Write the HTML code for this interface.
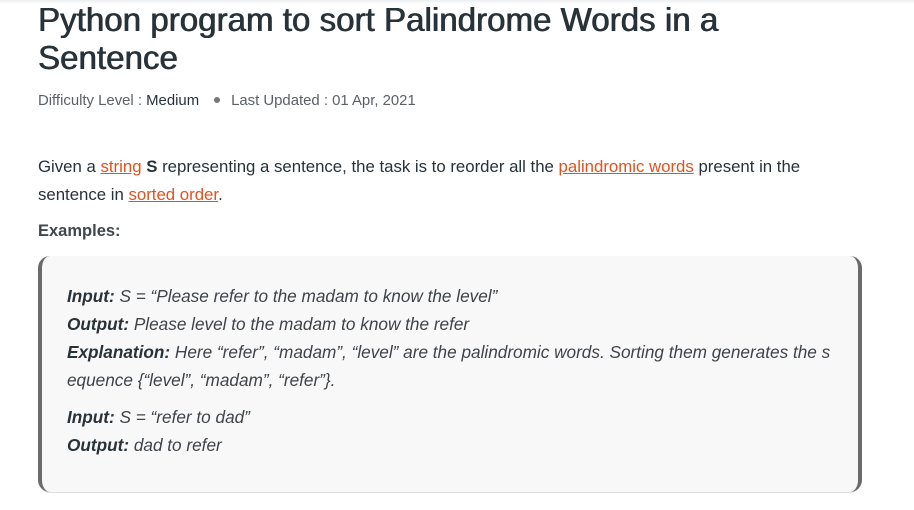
<!DOCTYPE html>
<html><head><meta charset="utf-8"><style>
html,body{margin:0;padding:0;background:#fff;width:914px;height:510px;overflow:hidden}
body{font-family:"Liberation Sans",sans-serif;color:#273239;position:relative}
.top{position:absolute;left:0;top:0;width:914px;height:4px;background:linear-gradient(#eceef0,#fff)}
h1{position:absolute;left:38px;top:1px;margin:0;font-size:33px;line-height:38px;font-weight:normal;text-shadow:0.5px 0 0 #273239,-0.3px 0 0 #273239;color:#273239;width:800px;letter-spacing:0.05px}
.meta{position:absolute;left:38px;top:93px;font-size:14.9px;color:#5b6167}
.meta b{font-weight:normal;color:#273239}
.dot{display:inline-block;width:6px;height:6px;border-radius:50%;background:#777;margin:0 11px 2px 15px;vertical-align:middle}
p.d{position:absolute;left:38px;top:153px;margin:0;font-size:16.8px;line-height:28px;width:800px;color:#273239}
a{color:#e0531f;text-decoration:underline}
.ex{position:absolute;left:38px;top:222px;font-size:16.5px;font-weight:bold;color:#40464c}
.box{position:absolute;left:38px;top:256px;width:824px;height:236px;background:#f8f8f8;border-left:4px solid #6b6b6b;border-right:4px solid #6b6b6b;border-radius:12px;box-sizing:border-box;box-shadow:0 2px 0 -1px #ddd}
.box div{position:absolute;left:25px;font-style:italic;font-size:17.2px;color:#3e444a;line-height:28px;width:790px;white-space:nowrap}
.box b{color:#273239}
</style></head><body>
<div class="top"></div>
<h1>Python program to sort Palindrome Words in a Sentence</h1>
<div class="meta">Difficulty Level : <b>Medium</b><span class="dot"></span>Last Updated : 01 Apr, 2021</div>
<p class="d">Given a <a>string</a> <b>S</b> representing a sentence, the task is to reorder all the <a>palindromic words</a> present in the<br>sentence in <a>sorted order</a>.</p>
<div class="ex">Examples:</div>
<div class="box">
<div style="top:26px"><b>Input:</b> S = “Please refer to the madam to know the level”</div>
<div style="top:54px"><b>Output:</b> Please level to the madam to know the refer</div>
<div style="top:82px"><b>Explanation:</b> Here “refer”, “madam”, “level” are the palindromic words. Sorting them generates the s<br>equence {“level”, “madam”, “refer”}.</div>
<div style="top:147px"><b>Input:</b> S = “refer to dad”</div>
<div style="top:175px"><b>Output:</b> dad to refer</div>
</div>
</body></html>
